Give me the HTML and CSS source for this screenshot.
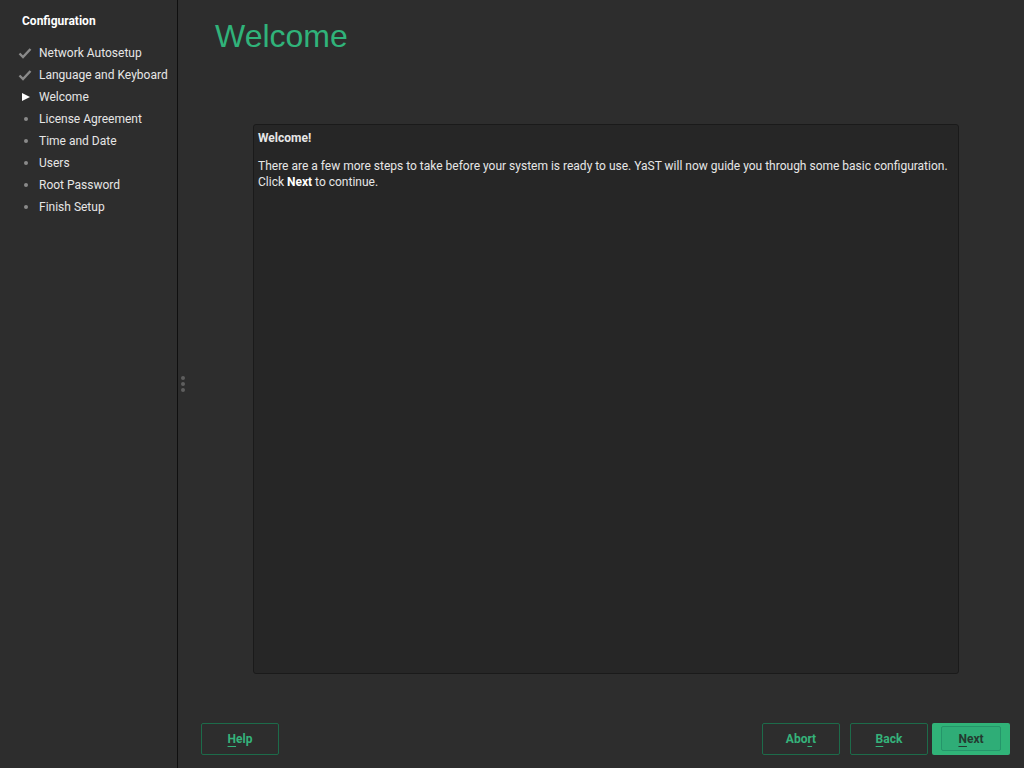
FILE: index.html
```html
<!DOCTYPE html>
<html>
<head>
<meta charset="utf-8">
<link rel="stylesheet" href="styles.css">
</head>
<body>
<div class="app">
  <aside class="sidebar">
    <div class="side-title">Configuration</div>
    <ul class="steps">
      <li class="done"><span class="mark"><svg width="14" height="12" viewBox="0 0 14 12"><path d="M1.5 6.5 L5 10 L12.5 2" fill="none" stroke="#8a8a8a" stroke-width="2.4"/></svg></span>Network Autosetup</li>
      <li class="done"><span class="mark"><svg width="14" height="12" viewBox="0 0 14 12"><path d="M1.5 6.5 L5 10 L12.5 2" fill="none" stroke="#8a8a8a" stroke-width="2.4"/></svg></span>Language and Keyboard</li>
      <li class="current"><span class="mark"><svg width="10" height="10" viewBox="0 0 10 10"><path d="M1 1 L9 5 L1 9 Z" fill="#ffffff"/></svg></span>Welcome</li>
      <li><span class="mark"><span class="dot"></span></span>License Agreement</li>
      <li><span class="mark"><span class="dot"></span></span>Time and Date</li>
      <li><span class="mark"><span class="dot"></span></span>Users</li>
      <li><span class="mark"><span class="dot"></span></span>Root Password</li>
      <li><span class="mark"><span class="dot"></span></span>Finish Setup</li>
    </ul>
  </aside>
  <div class="splitter">
    <div class="handle"><span></span><span></span><span></span></div>
  </div>
  <main class="main">
    <h1 class="title">Welcome</h1>
    <div class="content-wrap">
      <div class="content">
        <p class="heading">Welcome!</p>
        <p>There are a few more steps to take before your system is ready to use. YaST will now guide you through some basic configuration. Click <b>Next</b> to continue.</p>
      </div>
    </div>
    <div class="buttons">
      <button class="btn"><u>H</u>elp</button>
      <div class="spacer"></div>
      <button class="btn">Abo<u>r</u>t</button>
      <button class="btn btn-back"><u>B</u>ack</button>
      <button class="btn btn-primary"><span class="inner"><u>N</u>ext</span></button>
    </div>
  </main>
</div>
</body>
</html>
```

FILE: styles.css
```css
html, body {
  margin: 0;
  padding: 0;
  width: 1024px;
  height: 768px;
  overflow: hidden;
  background: #2d2d2d;
  font-family: Roboto, "Liberation Sans", sans-serif;
  color: #e6e6e6;
}

.app {
  display: flex;
  width: 1024px;
  height: 768px;
}

.sidebar {
  width: 177px;
  flex: none;
  background: #2d2d2d;
  border-right: 1px solid #0f0f0f;
  box-sizing: content-box;
}

.side-title {
  font-size: 12px;
  font-weight: bold;
  color: #ffffff;
  padding: 14px 0 0 22px;
  line-height: 15px;
}

.steps {
  list-style: none;
  margin: 13px 0 0 0;
  padding: 0;
}

.steps li {
  display: flex;
  align-items: center;
  height: 22px;
  font-size: 12px;
  color: #e6e6e6;
}

.mark {
  width: 39px;
  display: flex;
  box-sizing: border-box;
  justify-content: flex-start;
  padding-left: 12px;
}

.done .mark {
  padding-left: 18px;
}

.current .mark {
  padding-left: 21px;
}

.dot {
  display: block;
  width: 4px;
  height: 4px;
  border-radius: 50%;
  background: #8a8a8a;
  margin-left: 12px;
}

.splitter {
  width: 10px;
  flex: none;
  display: flex;
  align-items: center;
  justify-content: center;
}

.handle {
  display: flex;
  flex-direction: column;
  gap: 2px;
}

.handle span {
  display: block;
  width: 4px;
  height: 4px;
  border-radius: 50%;
  background: #5e5e5e;
}

.main {
  flex: 1;
  display: flex;
  flex-direction: column;
  padding: 0 13px 14px 13px;
}

.title {
  margin: 19px 0 0 14px;
  font-family: "Liberation Sans", Arial, sans-serif;
  font-weight: normal;
  font-size: 32px;
  line-height: 34px;
  color: #30b37a;
}

.content-wrap {
  flex: 1;
  padding: 71px 52px 0 52px;
  display: flex;
  flex-direction: column;
}

.content {
  height: 550px;
  box-sizing: border-box;
  background: #262626;
  border: 1px solid #1a1a1a;
  border-radius: 3px;
  padding: 5px 2px 5px 4px;
  font-size: 12px;
  line-height: 16px;
  color: #e6e6e6;
}

.content p {
  margin: 0 0 12px 0;
}

.content .heading {
  font-weight: bold;
  margin-bottom: 12px;
}

.content b {
  color: #ffffff;
}

.buttons {
  display: flex;
  align-items: center;
  height: 31px;
  margin-top: auto;
}

.spacer {
  flex: 1;
}

.btn {
  width: 78px;
  height: 32px;
  box-sizing: border-box;
  background: transparent;
  border: 1px solid #1d6b4a;
  border-radius: 2px;
  color: #35b37b;
  font-family: Roboto, "Liberation Sans", sans-serif;
  font-weight: bold;
  font-size: 12px;
  padding: 0;
  margin: 0;
}

.btn u {
  text-decoration-thickness: 1px;
  text-underline-offset: 3px;
}

.btn-back {
  margin-left: 10px;
}

.btn-primary {
  margin-left: 4px;
  width: 78px;
  margin-right: 1px;
  background: #30b378;
  border: none;
  color: #1e3b2f;
  display: flex;
  align-items: center;
  justify-content: center;
}

.btn-primary .inner {
  display: flex;
  align-items: center;
  justify-content: center;
  width: 60px;
  height: 25px;
  box-sizing: border-box;
  border: 1px solid #25956a;
  border-radius: 2px;
  background: #2fad77;
  color: #243a30;
}
```
